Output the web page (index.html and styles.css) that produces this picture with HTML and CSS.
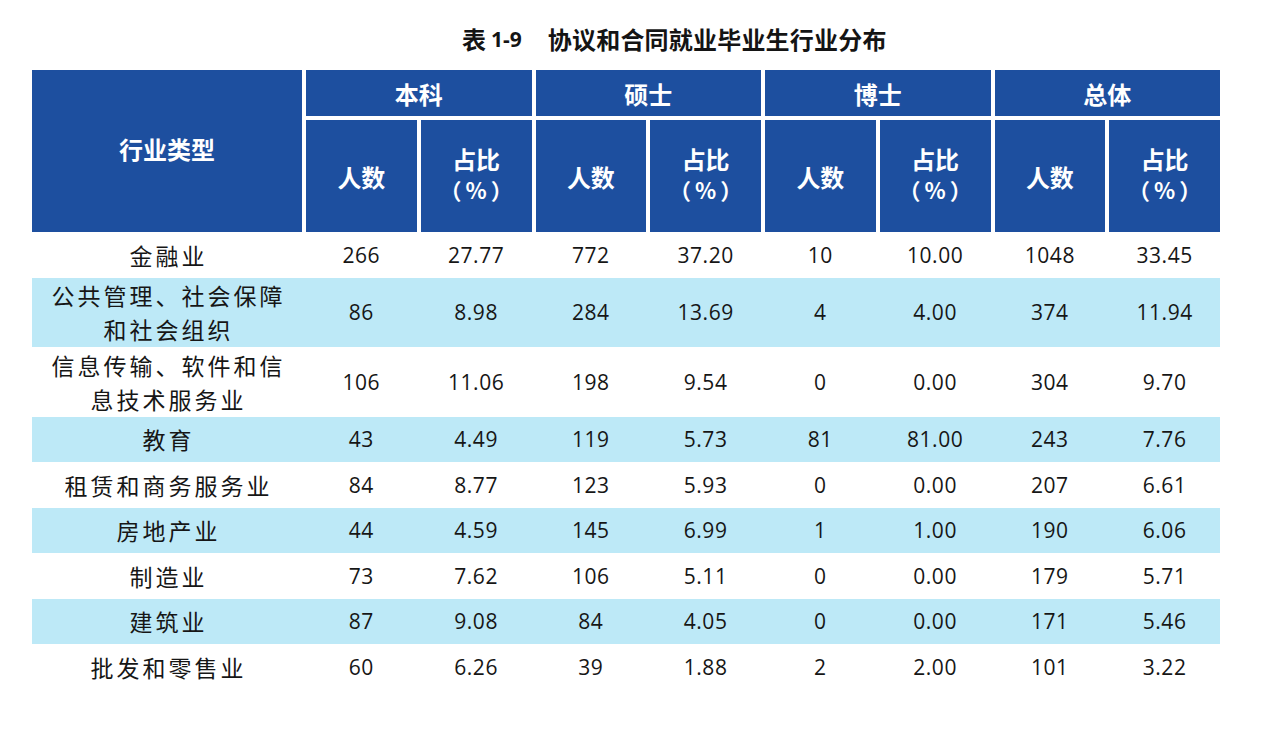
FILE: index.html
```html
<!DOCTYPE html>
<html lang="zh-CN">
<head>
<meta charset="utf-8">
<title>表 1-9 协议和合同就业毕业生行业分布</title>
<link rel="stylesheet" href="styles.css">
</head>
<body>
<div class="page">
  <h1 class="title">表 <span class="title-num">1-9</span><span class="title-text">协议和合同就业毕业生行业分布</span></h1>
  <div class="table">
    <div class="head">
      <div class="h-type">行业类型</div>
      <div class="h-group">本科</div>
      <div class="h-group">硕士</div>
      <div class="h-group">博士</div>
      <div class="h-group">总体</div>
      <div class="h-sub">人数</div>
      <div class="h-sub h-pct">占比<span class="pct">（%）</span></div>
      <div class="h-sub">人数</div>
      <div class="h-sub h-pct">占比<span class="pct">（%）</span></div>
      <div class="h-sub">人数</div>
      <div class="h-sub h-pct">占比<span class="pct">（%）</span></div>
      <div class="h-sub">人数</div>
      <div class="h-sub h-pct">占比<span class="pct">（%）</span></div>
    </div>
    <div class="row">
      <div class="name">金融业</div><div>266</div><div>27.77</div><div>772</div><div>37.20</div><div>10</div><div>10.00</div><div>1048</div><div>33.45</div>
    </div>
    <div class="row alt tall">
      <div class="name">公共管理、社会保障<br>和社会组织</div><div>86</div><div>8.98</div><div>284</div><div>13.69</div><div>4</div><div>4.00</div><div>374</div><div>11.94</div>
    </div>
    <div class="row tall">
      <div class="name">信息传输、软件和信<br>息技术服务业</div><div>106</div><div>11.06</div><div>198</div><div>9.54</div><div>0</div><div>0.00</div><div>304</div><div>9.70</div>
    </div>
    <div class="row alt">
      <div class="name">教育</div><div>43</div><div>4.49</div><div>119</div><div>5.73</div><div>81</div><div>81.00</div><div>243</div><div>7.76</div>
    </div>
    <div class="row">
      <div class="name">租赁和商务服务业</div><div>84</div><div>8.77</div><div>123</div><div>5.93</div><div>0</div><div>0.00</div><div>207</div><div>6.61</div>
    </div>
    <div class="row alt">
      <div class="name">房地产业</div><div>44</div><div>4.59</div><div>145</div><div>6.99</div><div>1</div><div>1.00</div><div>190</div><div>6.06</div>
    </div>
    <div class="row">
      <div class="name">制造业</div><div>73</div><div>7.62</div><div>106</div><div>5.11</div><div>0</div><div>0.00</div><div>179</div><div>5.71</div>
    </div>
    <div class="row alt">
      <div class="name">建筑业</div><div>87</div><div>9.08</div><div>84</div><div>4.05</div><div>0</div><div>0.00</div><div>171</div><div>5.46</div>
    </div>
    <div class="row">
      <div class="name">批发和零售业</div><div>60</div><div>6.26</div><div>39</div><div>1.88</div><div>2</div><div>2.00</div><div>101</div><div>3.22</div>
    </div>
  </div>
</div>
</body>
</html>
```

FILE: styles.css
```css
html, body {
  margin: 0;
  padding: 0;
  background: #ffffff;
}

.page {
  width: 1270px;
  height: 734px;
  box-sizing: border-box;
  padding: 23px 0 0 32px;
  font-family: "Noto Sans CJK SC", "Noto Sans", sans-serif;
  color: #161616;
}

.title {
  margin: 0 0 15px 430px;
  height: 32px;
  line-height: 32px;
  font-size: 24px;
  font-weight: 700;
  color: #141414;
  white-space: nowrap;
  display: flex;
  align-items: center;
}

.title-num {
  font-family: "Open Sans", "Liberation Sans", sans-serif;
  font-size: 21px;
  font-weight: 700;
  margin-left: 5px;
}

.title-text {
  margin-left: 26px;
  letter-spacing: 0.2px;
}

.table {
  width: 1188px;
}

.head {
  display: grid;
  grid-template-columns: 270px repeat(8, 1fr);
  grid-template-rows: 46px 112px;
  column-gap: 4px;
  row-gap: 4px;
  color: #ffffff;
  font-weight: 700;
  font-size: 24px;
}

.head > div {
  background: #1d4f9f;
  display: flex;
  align-items: center;
  justify-content: center;
  text-align: center;
}

.h-type {
  grid-row: 1 / span 2;
  padding-bottom: 6px;
  box-sizing: border-box;
}

.h-group {
  grid-column: span 2;
}

.h-pct {
  flex-direction: column;
  line-height: 31px;
  padding-bottom: 4px;
  box-sizing: border-box;
}

.pct {
  font-size: 22px;
  letter-spacing: 4px;
  padding-left: 4px;
}

.row {
  display: grid;
  grid-template-columns: 270px repeat(8, 1fr);
  column-gap: 4px;
  height: 45.5px;
  align-items: center;
  text-align: center;
  font-family: "Open Sans", "Liberation Sans", sans-serif;
  font-size: 21px;
  letter-spacing: 0.5px;
}

.row.tall {
  height: 69.5px;
}

.row.alt {
  background: #bde9f7;
}

.name {
  font-family: "Noto Sans CJK SC", "Noto Sans", sans-serif;
  font-size: 23px;
  letter-spacing: 3px;
  line-height: 34px;
  padding-left: 3px;
}
```
